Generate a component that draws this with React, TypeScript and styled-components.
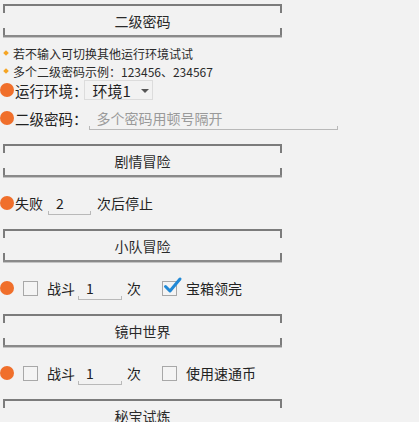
import React from "react";
import styled, { createGlobalStyle } from "styled-components";

const Global = createGlobalStyle`
  html, body { margin: 0; padding: 0; background: #f2f2f2; }
  body { font-family: "Noto Sans CJK SC", "Noto Sans", sans-serif; color: #222; overflow: hidden; }
`;

const Page = styled.div`
  width: 419px;
  height: 422px;
  padding-top: 4px;
  box-sizing: border-box;
  background: #f2f2f2;
  overflow: hidden;
`;

const SectionHeader = styled.div`
  position: relative;
  margin-left: 3px;
  width: 279px;
  height: 33px;
  box-sizing: border-box;
  border-top: 2px solid #7c7c7c;
  border-bottom: 2px solid #8a8a8a;
  box-shadow: 0 1px 0 #c4c4c4;
  display: flex;
  align-items: center;
  justify-content: center;
  font-size: 14px;
  color: #2a2a2a;
  &::before,
  &::after {
    content: "";
    position: absolute;
    left: 0;
    right: 0;
    height: 7px;
    border-left: 2px solid #7c7c7c;
    border-right: 2px solid #7c7c7c;
  }
  &::before { top: 0; }
  &::after { bottom: 0; }
`;

const Notes = styled.div`
  margin-top: 7px;
  display: flex;
  flex-direction: column;
`;

const Note = styled.div`
  height: 18px;
  display: flex;
  align-items: center;
  font-size: 12px;
  color: #2a2a2a;
  &::before {
    content: "";
    width: 4px;
    height: 4px;
    margin: 0 5px 0 4px;
    background: #f5a524;
    transform: rotate(45deg);
  }
`;

const FieldRow = styled.div<{ $h: number; $mt?: number }>`
  display: flex;
  align-items: center;
  height: ${(p) => p.$h}px;
  margin-top: ${(p) => p.$mt ?? 0}px;
`;

const Dot = styled.span`
  flex: none;
  width: 14px;
  height: 14px;
  border-radius: 50%;
  background: #f06f2b;
`;

const Label = styled.span<{ $ml?: number }>`
  font-size: 14.5px;
  color: #222;
  margin-left: ${(p) => p.$ml ?? 1}px;
  white-space: nowrap;
`;

const Spinner = styled.div`
  position: relative;
  margin-left: -4px;
  width: 69px;
  height: 20px;
  box-sizing: border-box;
  border: 1px solid #dcdcdc;
  display: flex;
  align-items: center;
  padding-left: 8px;
  font-size: 15px;
  color: #1e1e1e;
`;

const Caret = styled.span`
  position: absolute;
  right: 3px;
  top: 8px;
  width: 0;
  height: 0;
  border-left: 4px solid transparent;
  border-right: 4px solid transparent;
  border-top: 4px solid #555;
`;

const Underlined = styled.div<{ $w: number; $ml: number }>`
  position: relative;
  flex: none;
  width: ${(p) => p.$w}px;
  margin-left: ${(p) => p.$ml}px;
  height: 24px;
  box-sizing: border-box;
  border-bottom: 1px solid #b9b9b9;
  display: flex;
  align-items: center;
  padding-left: 8px;
  font-size: 14px;
  color: #222;
  &::before,
  &::after {
    content: "";
    position: absolute;
    bottom: -1px;
    width: 1px;
    height: 4px;
    background: #b9b9b9;
  }
  &::before { left: 0; }
  &::after { right: 0; }
`;

const Placeholder = styled.span`
  color: #9a9a9a;
  font-size: 14px;
`;

const OptionRow = styled.div`
  display: flex;
  align-items: center;
  height: 52px;
`;

const Text = styled.span<{ $ml: number }>`
  margin-left: ${(p) => p.$ml}px;
  font-size: 14px;
  color: #222;
  white-space: nowrap;
`;

const Box = styled.span<{ $ml: number }>`
  position: relative;
  flex: none;
  width: 15px;
  height: 15px;
  margin-left: ${(p) => p.$ml}px;
  box-sizing: border-box;
  border: 1px solid #a8a8a8;
  background: #f4f4f4;
`;

const Tick = styled.svg`
  position: absolute;
  left: 1px;
  top: -5px;
  width: 17px;
  height: 17px;
  overflow: visible;
`;

const Check: React.FC<{ checked?: boolean; ml: number }> = ({ checked, ml }) => (
  <Box $ml={ml}>
    {checked && (
      <Tick viewBox="0 0 17 17">
        <path d="M1.5 9.5 L6 14 L16 2" fill="none" stroke="#2189d6" strokeWidth="3" strokeLinecap="round" strokeLinejoin="round" />
      </Tick>
    )}
  </Box>
);

const BattleRow: React.FC<{ extra: string; checked?: boolean }> = ({ extra, checked }) => (
  <OptionRow>
    <Dot />
    <Check ml={9} />
    <Text $ml={9}>战斗</Text>
    <Underlined $w={44} $ml={3}>1</Underlined>
    <Text $ml={5}>次</Text>
    <Check ml={21} checked={checked} />
    <Text $ml={9}>{extra}</Text>
  </OptionRow>
);

export default function App() {
  return (
    <Page>
      <Global />
      <SectionHeader>二级密码</SectionHeader>
      <Notes>
        <Note>若不输入可切换其他运行环境试试</Note>
        <Note>多个二级密码示例：123456、234567</Note>
      </Notes>
      <FieldRow $h={20}>
        <Dot />
        <Label>运行环境：</Label>
        <Spinner>
          环境1
          <Caret />
        </Spinner>
      </FieldRow>
      <FieldRow $h={28} $mt={4}>
        <Dot />
        <Label>二级密码：</Label>
        <Underlined $w={249} $ml={1}>
          <Placeholder>多个密码用顿号隔开</Placeholder>
        </Underlined>
      </FieldRow>
      <div style={{ height: 12 }} />
      <SectionHeader>剧情冒险</SectionHeader>
      <OptionRow>
        <Dot />
        <Text $ml={1}>失败</Text>
        <Underlined $w={43} $ml={5}>2</Underlined>
        <Text $ml={6}>次后停止</Text>
      </OptionRow>
      <SectionHeader>小队冒险</SectionHeader>
      <BattleRow extra="宝箱领完" checked />
      <SectionHeader>镜中世界</SectionHeader>
      <BattleRow extra="使用速通币" />
      <SectionHeader>秘宝试炼</SectionHeader>
    </Page>
  );
}
